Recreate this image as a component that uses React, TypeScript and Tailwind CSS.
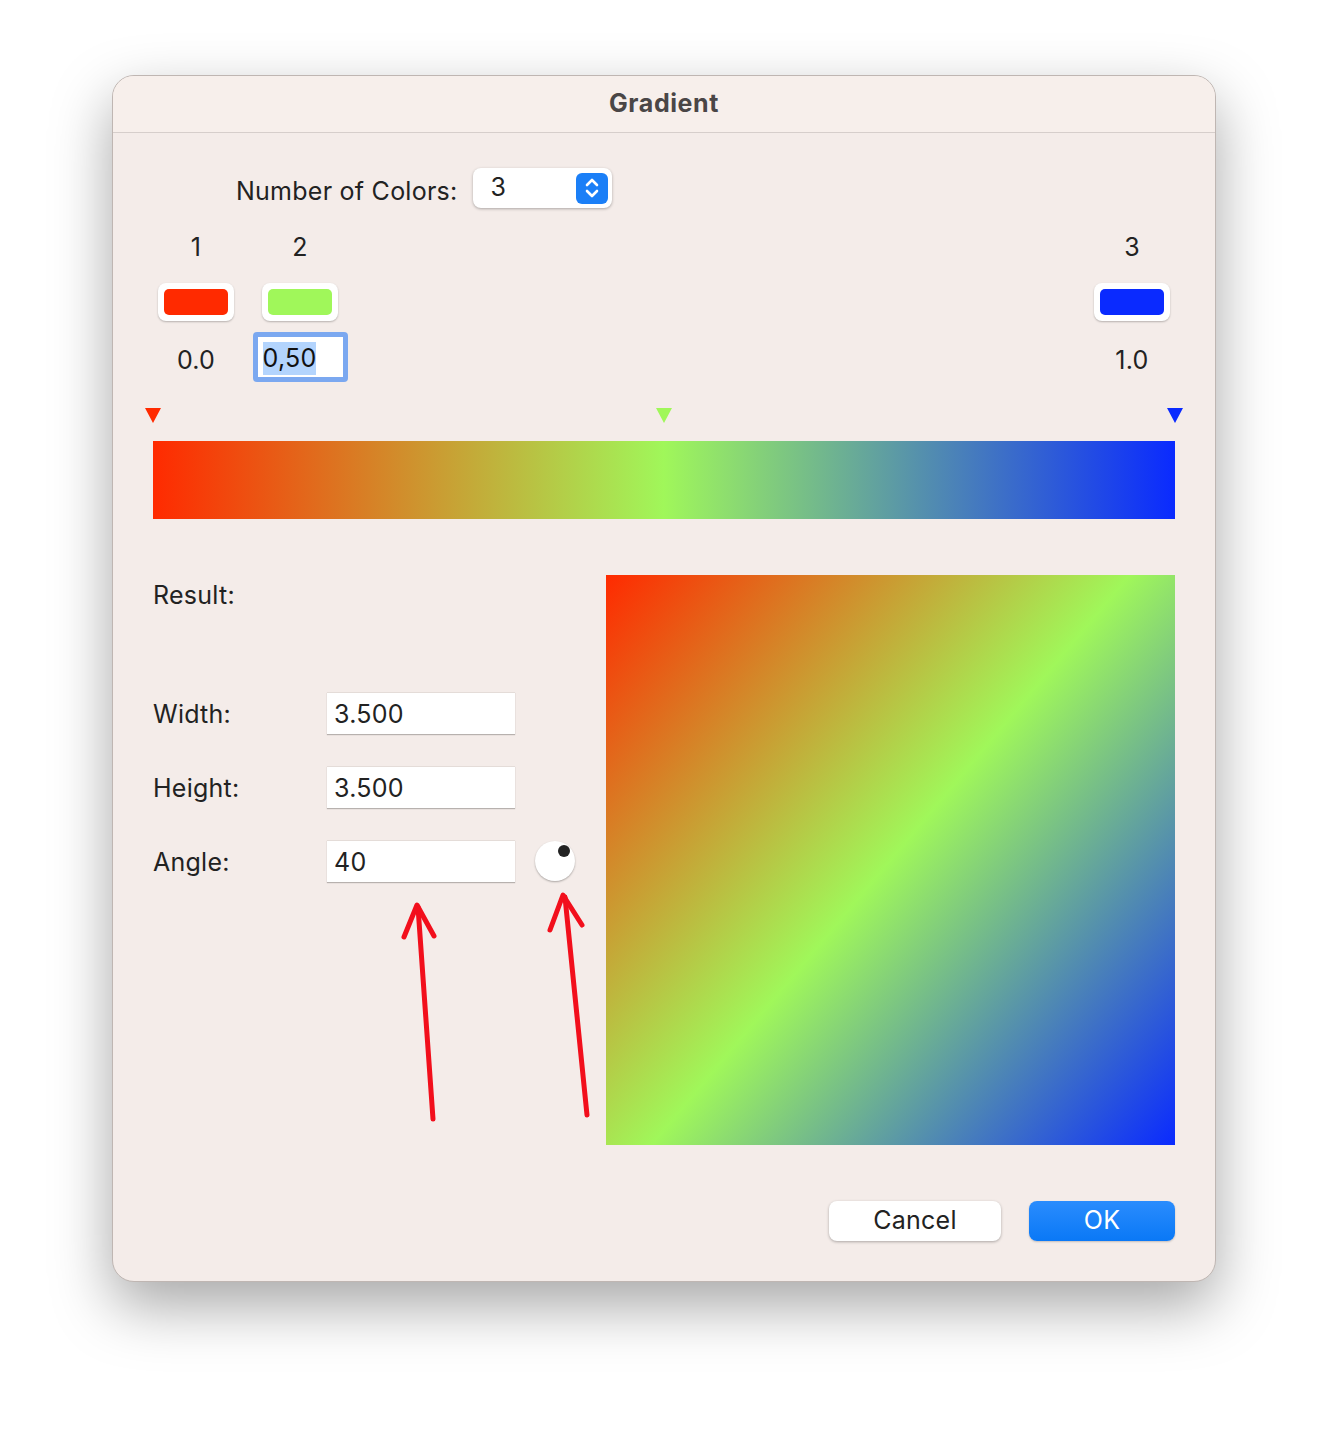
const font = { fontFamily: "Inter, 'Noto Sans', sans-serif" };

const Triangle = ({ color, pos }: { color: string; pos: string }) => (
  <svg
    width="16"
    height="15"
    viewBox="0 0 16 15"
    className={`absolute top-0 -translate-x-1/2 ${pos}`}
  >
    <polygon points="0,0 16,0 8,15" fill={color} />
  </svg>
);

const Swatch = ({ color }: { color: string }) => (
  <div className="w-[76px] h-[38px] bg-white rounded-[8px] shadow-[0_1px_2px_rgba(0,0,0,0.25)] p-[6px]">
    <div className="w-full h-full rounded-[5px]" style={{ background: color }} />
  </div>
);

const Field = ({ value }: { value: string }) => (
  <div className="w-[188px] h-[42px] bg-white border-t border-[#e4dcd8] shadow-[0_1px_1px_rgba(0,0,0,0.25)] flex items-center px-[7px] pt-[4px]">
    {value}
  </div>
);

const App = () => {
  return (
    <div className="min-h-[1430px] bg-white pt-[75px] pl-[112px]" style={font}>
      <div className="relative w-[1104px] h-[1207px] rounded-[22px] bg-[#f4ece9] border border-[#bfb6b2] shadow-[0_24px_60px_rgba(0,0,0,0.35)] overflow-hidden text-[25px] tracking-[0.25px] text-[#222]">
        <div className="h-[57px] bg-[#f7efeb] border-b border-[#d6cecb] flex items-center justify-center">
          <span className="text-[25px] font-bold text-[#4a4646] tracking-[0.6px]">Gradient</span>
        </div>

        <div className="px-[39px] pt-[35px]">
          <div className="flex items-center pl-[84px] gap-[16px] h-[40px]">
            <span className="pt-[5px] leading-[30px]">Number of Colors:</span>
            <div className="w-[139px] h-[40px] bg-white rounded-[8px] shadow-[0_1px_3px_rgba(0,0,0,0.3)] flex items-center justify-between pl-[17px] pr-[4px]">
              <span>3</span>
              <div className="w-[32px] h-[31px] rounded-[6px] bg-[#1b7ff7] flex items-center justify-center">
                <svg width="16" height="22" viewBox="0 0 16 22" fill="none" stroke="white" strokeWidth="2.6" strokeLinecap="round" strokeLinejoin="round">
                  <polyline points="3,8 8,3 13,8" />
                  <polyline points="3,14 8,19 13,14" />
                </svg>
              </div>
            </div>
          </div>

          <div className="flex mt-[24px] ml-[-4px] mr-[-4px]">
            <div className="w-[96px] flex flex-col items-center">
              <span className="h-[30px] leading-[30px]">1</span>
              <div className="mt-[21px]"><Swatch color="#ff2a00" /></div>
              <div className="mt-[11px] h-[50px] flex items-center pt-[8px]">0.0</div>
            </div>
            <div className="w-[96px] ml-[8px] flex flex-col items-center">
              <span className="h-[30px] leading-[30px]">2</span>
              <div className="mt-[21px]"><Swatch color="#a0f75a" /></div>
              <div className="mt-[11px] w-[95px] h-[50px] rounded-[4px] bg-[#7ba8f0] p-[5px]">
                <div className="w-full h-full bg-white flex items-center pl-[5px] pt-[3px]">
                  <span className="bg-[#b3d4fd] text-[#111] leading-[33px]">0,50</span>
                </div>
              </div>
            </div>
            <div className="w-[96px] ml-auto flex flex-col items-center">
              <span className="h-[30px] leading-[30px]">3</span>
              <div className="mt-[21px]"><Swatch color="#0a2aff" /></div>
              <div className="mt-[11px] h-[50px] flex items-center pt-[8px]">1.0</div>
            </div>
          </div>

          <div className="relative h-[15px] mt-[26px] mx-[1px]">
            <Triangle color="#ff2a00" pos="left-0" />
            <Triangle color="#a0f75a" pos="left-1/2" />
            <Triangle color="#0a2aff" pos="left-full" />
          </div>

          <div className="mt-[18px] mx-[1px] h-[78px] bg-[linear-gradient(90deg,#ff2a00,#a0f75a,#0a2aff)]" />

          <div className="flex mt-[56px] mx-[1px]">
            <div className="w-[454px]">
              <div className="mt-[2px]">Result:</div>
              <div className="mt-[77px] flex flex-col gap-[32px]">
                <div className="flex items-center">
                  <span className="w-[174px] pt-[4px]">Width:</span>
                  <Field value="3.500" />
                </div>
                <div className="flex items-center">
                  <span className="w-[174px] pt-[4px]">Height:</span>
                  <Field value="3.500" />
                </div>
                <div className="flex items-center">
                  <span className="w-[174px] pt-[4px]">Angle:</span>
                  <Field value="40" />
                  <div className="ml-[20px] relative w-[40px] h-[40px] rounded-full bg-white shadow-[0_1px_2px_rgba(0,0,0,0.3)]">
                    <div className="absolute left-[23px] top-[4px] w-[12px] h-[12px] rounded-full bg-[#222]" />
                  </div>
                </div>
              </div>
            </div>
            <div className="w-[570px] h-[570px] bg-[linear-gradient(130deg,#ff2a00,#a0f75a,#0a2aff)]" />
          </div>

          <div className="flex justify-end gap-[28px] mt-[56px] mr-[1px]">
            <button className="w-[172px] h-[40px] bg-white rounded-[8px] shadow-[0_1px_3px_rgba(0,0,0,0.3)]">
              Cancel
            </button>
            <button className="w-[146px] h-[40px] rounded-[8px] bg-[linear-gradient(180deg,#2a8cfd,#0a78f6)] shadow-[0_1px_2px_rgba(0,0,0,0.2)] text-white">
              OK
            </button>
          </div>
        </div>

        <svg
          className="absolute left-0 top-0 pointer-events-none"
          width="1104"
          height="1207"
          viewBox="112 75 1104 1207"
        >
          <g stroke="#f20f1c" strokeWidth="5" strokeLinecap="round" fill="none">
            <line x1="432" y1="1118" x2="417" y2="906" />
            <polyline points="403,936 416,904 433,935" strokeLinejoin="round" />
            <line x1="586" y1="1114" x2="564" y2="896" />
            <polyline points="549,929 562,894 581,924" strokeLinejoin="round" />
          </g>
        </svg>
      </div>
    </div>
  );
};

export default App;
